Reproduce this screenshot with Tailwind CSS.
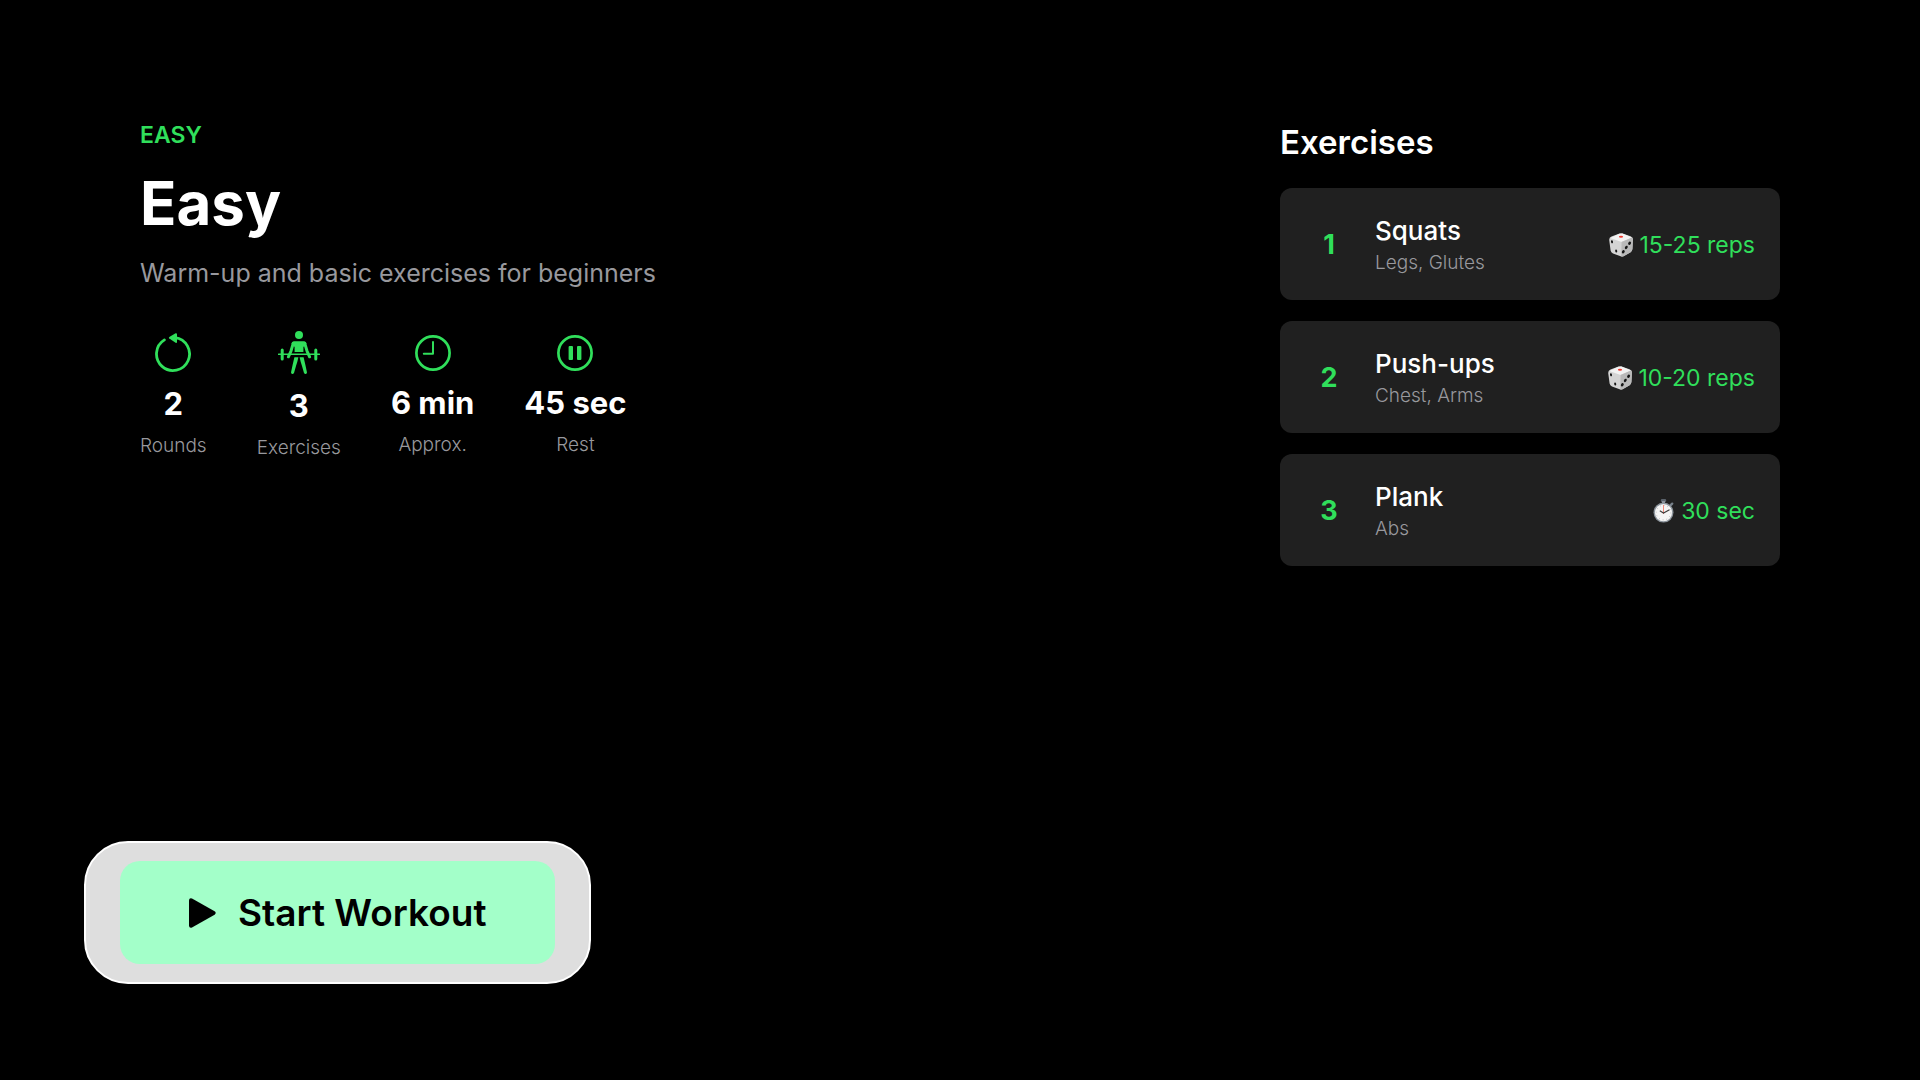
<!DOCTYPE html>
<html lang="en">

<head>
    <meta charset="UTF-8">
    <meta name="viewport" content="width=device-width, initial-scale=1.0">
    <title>Easy Workout</title>
    <script src="https://cdn.jsdelivr.net/npm/@tailwindcss/browser@4"></script>
</head>

<body class="bg-black text-white font-[Inter,sans-serif]">

    <!-- Shared emoji drawings -->
    <svg class="hidden" aria-hidden="true">
        <symbol id="dice" viewBox="0 0 24 24">
            <path d="M2.5 3.6 10.5.6Q12 .2 13.5.6L21.5 3.2Q24 4.2 23.9 6.5L23.4 16Q23.3 18 21.6 19.2L15 23Q13.3 23.9 11.6 23.3L4 20.5Q2 19.6 1.6 17.6L.2 7Q0 4.7 2.5 3.6Z" fill="#d4d4d4" />
            <path d="M1.2 5 10.5.7Q12 .2 13.5.6L22.8 4.6 13.5 8.6Q12.4 9 11.2 8.6Z" fill="#f3f3f3" />
            <path d="M12.6 9 23 4.6Q24 5.2 23.9 6.5L23.4 16Q23.3 18 21.6 19.2L15 23Q13.6 23.8 12.2 23.5Z" fill="#b9b9b9" />
            <ellipse cx="12" cy="3.7" rx="2.1" ry="1" fill="#f0392f" />
            <g fill="#151515">
                <ellipse cx="3" cy="8.8" rx="1" ry="1.6" transform="rotate(-12 3 8.8)" />
                <ellipse cx="7.2" cy="18" rx="1" ry="1.6" transform="rotate(-12 7.2 18)" />
                <ellipse cx="20.6" cy="10.2" rx="1.3" ry="1.8" transform="rotate(32 20.6 10.2)" />
                <ellipse cx="17.3" cy="14.4" rx="1.3" ry="1.8" transform="rotate(32 17.3 14.4)" />
                <ellipse cx="14.3" cy="18.8" rx="1.3" ry="1.8" transform="rotate(32 14.3 18.8)" />
            </g>
        </symbol>
        <symbol id="stopwatch" viewBox="0 0 22 24">
            <rect x="7.8" y="0" width="5.4" height="3" rx="1.2" fill="#5a626b" />
            <rect x="9" y="2" width="3" height="3" fill="#89919a" />
            <path d="m17.2 6.6 2-1.9" stroke="#77808a" stroke-width="2.4" stroke-linecap="round" />
            <circle cx="10.5" cy="13.6" r="10" fill="#8b939b" />
            <circle cx="10.5" cy="13.6" r="8.6" fill="#f4f4f4" />
            <circle cx="10.5" cy="13.6" r="7.3" fill="none" stroke="#a9a9a9" stroke-width="1" stroke-dasharray=".7 3.12" />
            <path d="M10.5 15V6" stroke="#f08a7c" stroke-width="1" />
            <path d="m6.8 11.8 3.7 2.2 6-3.2" fill="none" stroke="#3b3b3b" stroke-width="1.1" />
        </symbol>
    </svg>

    <main class="flex min-h-screen justify-between px-35 pt-29 pb-24">

        <!-- Workout summary -->
        <section class="flex flex-col items-start">
            <p class="mt-px text-[23px] leading-9 font-semibold text-[#30df5b]">EASY</p>
            <h1 class="mt-3 text-[60px] leading-[76px] font-bold">Easy</h1>
            <p class="mt-3.5 text-[25px] leading-9 text-[#98989d]">Warm-up and basic exercises for beginners</p>

            <ul class="mt-10 flex items-center gap-[50px] text-center">
                <li class="flex flex-col items-center">
                    <svg class="h-[39px] w-9" viewBox="0 0 36 39" fill="none">
                        <path d="M9.4 6.9A16.5 16.5 0 1 0 20 4.6" stroke="#30df5b" stroke-width="2.8" stroke-linecap="round" />
                        <path d="M14.3 4 20.6.2Q22 0 22 1.2V9Q22 10.2 20.6 9.8L14.3 5.6Q13.4 4.8 14.3 4Z" fill="#30df5b" />
                    </svg>
                    <strong class="mt-3 text-[31px] leading-10 font-bold">2</strong>
                    <span class="mt-2.5 text-[19px] leading-6 font-light text-[#98989d]">Rounds</span>
                </li>
                <li class="flex flex-col items-center">
                    <svg class="h-[43px] w-[42px]" viewBox="0 0 42 43" fill="none" stroke="#30df5b" stroke-linecap="round">
                        <circle cx="21" cy="4" r="4" fill="#30df5b" stroke="none" />
                        <path d="M16 10.2H26Q28 10.4 28.6 12.5L25.4 16V21H16.6V16L13.4 12.5Q14 10.4 16 10.2Z" fill="#30df5b" stroke="none" />
                        <path d="M15.3 12.2 13 20 10.4 25.8M26.7 12.2 29 20 31.6 25.8" stroke-width="3" />
                        <path d="M.6 23.3H41.4" stroke-width="1.4" />
                        <path d="M4.2 19V28M37.8 19V28" stroke-width="3" />
                        <path d="M16.4 26.2H20.4Q19.4 31 18 35L16 42Q15 43.4 13.6 42.7L13 41.6 14.6 34Z" fill="#30df5b" stroke="none" />
                        <path d="M25.6 26.2H21.6Q22.6 31 24 35L26 42Q27 43.4 28.4 42.7L29 41.6 27.4 34Z" fill="#30df5b" stroke="none" />
                    </svg>
                    <strong class="mt-3 text-[31px] leading-10 font-bold">3</strong>
                    <span class="mt-2.5 text-[19px] leading-6 font-light text-[#98989d]">Exercises</span>
                </li>
                <li class="flex flex-col items-center">
                    <svg class="size-9" viewBox="0 0 36 36" fill="none" stroke="#30df5b" stroke-linecap="round" stroke-linejoin="round">
                        <circle cx="18" cy="18" r="16.6" stroke-width="2.7" />
                        <path d="M18 7V18.8H8.8" stroke-width="2" />
                    </svg>
                    <strong class="mt-3 text-[31px] leading-10 font-bold">6 min</strong>
                    <span class="mt-2.5 text-[19px] leading-6 font-light text-[#98989d]">Approx.</span>
                </li>
                <li class="flex flex-col items-center">
                    <svg class="size-9" viewBox="0 0 36 36" fill="none">
                        <circle cx="18" cy="18" r="16.6" stroke="#30df5b" stroke-width="2.7" />
                        <rect x="11.6" y="11" width="4.4" height="14" rx="1" fill="#30df5b" />
                        <rect x="20" y="11" width="4.4" height="14" rx="1" fill="#30df5b" />
                    </svg>
                    <strong class="mt-3 text-[31px] leading-10 font-bold">45 sec</strong>
                    <span class="mt-2.5 text-[19px] leading-6 font-light text-[#98989d]">Rest</span>
                </li>
            </ul>

            <button type="button" class="mt-auto -ml-14 rounded-[44px] border-2 border-white bg-[#dedede] px-[34px] py-[18px] text-black">
                <span class="flex items-center gap-[22px] rounded-[20px] bg-[#a3ffc9] px-[69px] py-7">
                    <svg class="h-[30px] w-[27px]" viewBox="0 0 27 30">
                        <path d="M0 2.2Q.3-.6 3 .4L25.6 13.3Q27.8 15 25.6 16.7L3 29.6Q.3 30.6 0 27.8Z" />
                    </svg>
                    <span class="text-[37px] leading-[47px] font-semibold">Start Workout</span>
                </span>
            </button>
        </section>

        <!-- Exercise list -->
        <section class="w-[500px]">
            <h2 class="mt-1 text-[33px] leading-11 font-semibold">Exercises</h2>
            <ol class="mt-6 flex flex-col gap-[21px]">
                <li class="flex items-center rounded-xl bg-[#202020] px-[25px] pt-[25px] pb-[23px]">
                    <span class="w-12 text-center text-[27px] leading-9 font-bold text-[#30df5b]">1</span>
                    <div class="ml-[22px] flex-1">
                        <h3 class="text-[26px] leading-9 font-medium">Squats</h3>
                        <p class="text-[19px] leading-7 font-light text-[#98989d]">Legs, Glutes</p>
                    </div>
                    <span class="flex items-center gap-1.5 text-[23px] leading-8 text-[#30df5b]">
                        <svg class="size-6"><use href="#dice" /></svg>15-25 reps
                    </span>
                </li>
                <li class="flex items-center rounded-xl bg-[#202020] px-[25px] pt-[25px] pb-[23px]">
                    <span class="w-12 text-center text-[27px] leading-9 font-bold text-[#30df5b]">2</span>
                    <div class="ml-[22px] flex-1">
                        <h3 class="text-[26px] leading-9 font-medium">Push-ups</h3>
                        <p class="text-[19px] leading-7 font-light text-[#98989d]">Chest, Arms</p>
                    </div>
                    <span class="flex items-center gap-1.5 text-[23px] leading-8 text-[#30df5b]">
                        <svg class="size-6"><use href="#dice" /></svg>10-20 reps
                    </span>
                </li>
                <li class="flex items-center rounded-xl bg-[#202020] px-[25px] pt-[25px] pb-[23px]">
                    <span class="w-12 text-center text-[27px] leading-9 font-bold text-[#30df5b]">3</span>
                    <div class="ml-[22px] flex-1">
                        <h3 class="text-[26px] leading-9 font-medium">Plank</h3>
                        <p class="text-[19px] leading-7 font-light text-[#98989d]">Abs</p>
                    </div>
                    <span class="flex items-center gap-1.5 text-[23px] leading-8 text-[#30df5b]">
                        <svg class="h-6 w-[22px]"><use href="#stopwatch" /></svg>30 sec
                    </span>
                </li>
            </ol>
        </section>
    </main>

</body>

</html>
